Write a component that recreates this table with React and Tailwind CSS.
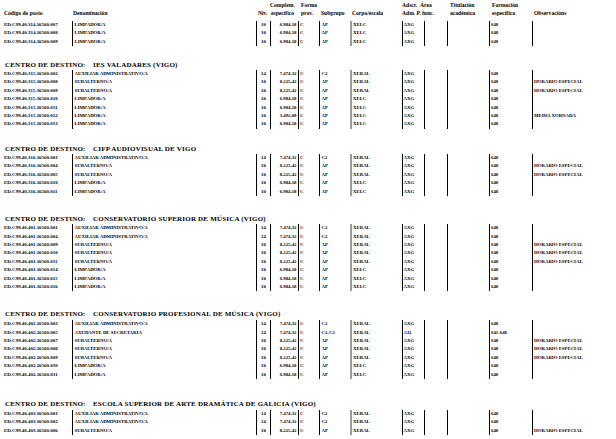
import React from "react";

const L = "LIMPADOR/A";
const S = "SUBALTERNO/A";
const AA = "AUXILIAR ADMINISTRATIVO/A";
const HE = "HORARIO ESPECIAL";

const r = (code, den, niv, comp, sub, corpo, ads = "AXG", form = "648", obs = "") => ({ code, den, niv, comp, sub, corpo, ads, form, obs });

const sections = [
  {
    title: null,
    mt: "mt-[3.8px]",
    rows: [
      r("ED.C99.40.314.16560.007", L, "10", "6.984,18", "AP", "XELC"),
      r("ED.C99.40.314.16560.008", L, "10", "6.984,18", "AP", "XELC"),
      r("ED.C99.40.314.16560.009", L, "10", "6.984,18", "AP", "XELC"),
    ],
  },
  {
    title: "IES VALADARES (VIGO)",
    mt: "mt-[14px]",
    rmt: "mt-0",
    rows: [
      r("ED.C99.40.315.16560.002", AA, "14", "7.474,32", "C2", "XERAL"),
      r("ED.C99.40.315.16560.008", S, "10", "8.225,42", "AP", "XERAL", "AXG", "648", HE),
      r("ED.C99.40.315.16560.009", S, "10", "8.225,42", "AP", "XERAL", "AXG", "648", HE),
      r("ED.C99.40.315.16560.010", L, "10", "6.984,18", "AP", "XELC"),
      r("ED.C99.40.315.16560.011", L, "10", "6.984,18", "AP", "XELC"),
      r("ED.C99.40.315.16560.012", L, "10", "3.492,09", "AP", "XELC", "AXG", "648", "MEDIA XORNADA"),
      r("ED.C99.40.315.16560.013", L, "10", "6.984,18", "AP", "XELC"),
    ],
  },
  {
    title: "CIFP AUDIOVISUAL DE VIGO",
    mt: "mt-[15.4px]",
    rmt: "mt-0",
    rows: [
      r("ED.C99.40.316.16560.001", AA, "14", "7.474,32", "C2", "XERAL"),
      r("ED.C99.40.316.16560.004", S, "10", "8.225,42", "AP", "XERAL", "AXG", "648", HE),
      r("ED.C99.40.316.16560.005", S, "10", "8.225,42", "AP", "XERAL", "AXG", "648", HE),
      r("ED.C99.40.316.16560.010", L, "10", "6.984,18", "AP", "XELC"),
      r("ED.C99.40.316.16560.011", L, "10", "6.984,18", "AP", "XELC"),
    ],
  },
  {
    title: "CONSERVATORIO SUPERIOR DE MÚSICA (VIGO)",
    mt: "mt-[18.2px]",
    rmt: "mt-0",
    rows: [
      r("ED.C99.40.401.16560.001", AA, "14", "7.474,32", "C2", "XERAL"),
      r("ED.C99.40.401.16560.004", AA, "14", "7.474,32", "C2", "XERAL"),
      r("ED.C99.40.401.16560.009", S, "10", "8.225,42", "AP", "XERAL", "AXG", "648", HE),
      r("ED.C99.40.401.16560.010", S, "10", "8.225,42", "AP", "XERAL", "AXG", "648", HE),
      r("ED.C99.40.401.16560.011", S, "10", "8.225,42", "AP", "XERAL", "AXG", "648", HE),
      r("ED.C99.40.401.16560.014", L, "10", "6.984,18", "AP", "XELC"),
      r("ED.C99.40.401.16560.015", L, "10", "6.984,18", "AP", "XELC"),
      r("ED.C99.40.401.16560.016", L, "10", "6.984,18", "AP", "XELC"),
    ],
  },
  {
    title: "CONSERVATORIO PROFESIONAL DE MÚSICA (VIGO)",
    mt: "mt-[17.5px]",
    rmt: "mt-[1.3px]",
    rows: [
      r("ED.C99.40.402.16560.003", AA, "14", "7.474,32", "C2", "XERAL"),
      r("ED.C99.40.402.16560.005", "AXUDANTE DE SECRETARÍA", "14", "7.474,32", "C1-C2", "XERAL", "A11", "641-648"),
      r("ED.C99.40.402.16560.007", S, "10", "8.225,42", "AP", "XERAL", "AXG", "648", HE),
      r("ED.C99.40.402.16560.008", S, "10", "8.225,42", "AP", "XERAL", "AXG", "648", HE),
      r("ED.C99.40.402.16560.009", S, "10", "8.225,42", "AP", "XERAL", "AXG", "648", HE),
      r("ED.C99.40.402.16560.030", L, "10", "6.984,18", "AP", "XELC"),
      r("ED.C99.40.402.16560.031", L, "10", "6.984,18", "AP", "XELC"),
    ],
  },
  {
    title: "ESCOLA SUPERIOR DE ARTE DRAMÁTICA DE GALICIA (VIGO)",
    mt: "mt-[20.4px]",
    rmt: "mt-[0.8px]",
    rows: [
      r("ED.C99.40.403.16560.001", AA, "14", "7.474,32", "C2", "XERAL"),
      r("ED.C99.40.403.16560.002", AA, "14", "7.474,32", "C2", "XERAL"),
      r("ED.C99.40.403.16560.006", S, "10", "8.225,42", "AP", "XERAL", "AXG", "648", HE),
    ],
  },
];

const grid =
  "grid grid-cols-[72px_184px_14px_27.5px_21.5px_31px_51.5px_22.5px_23px_42px_43px_1fr] h-[8.4px] leading-[8.4px] text-[4.8px] font-bold whitespace-nowrap";
const bl = "border-l border-black";

function Row({ d }) {
  return (
    <div className={grid}>
      <div className="pl-[4px] text-[4.95px]">{d.code}</div>
      <div className={`${bl} pl-[1.5px]`}>{d.den}</div>
      <div className={`${bl} text-center`}>{d.niv}</div>
      <div className={`${bl} text-right pr-[1px]`}>{d.comp}</div>
      <div className={`${bl} pl-[1.5px]`}>C</div>
      <div className={`${bl} pl-[1.5px]`}>{d.sub}</div>
      <div className="border-l-2 border-[#9a9a9a] pl-[1px]">{d.corpo}</div>
      <div className={`${bl} pl-[1px]`}>{d.ads}</div>
      <div className={bl}></div>
      <div className={bl}></div>
      <div className={`${bl} pl-[1px]`}>{d.form}</div>
      <div className="border-l-[1.5px] border-black pl-[1px]">{d.obs}</div>
    </div>
  );
}

function Header() {
  const c = "flex flex-col leading-[8px] h-[16px]";
  return (
    <div className="grid grid-cols-[73px_185px_12px_31px_20px_31px_50px_18px_30px_42px_42px_1fr] pt-[1px] text-[5.6px] font-bold whitespace-nowrap">
      <div className={`${c} justify-end pl-[4px]`}><span>Código do posto</span></div>
      <div className={`${c} justify-end`}><span>Denominación</span></div>
      <div className={`${c} justify-end`}><span>Niv.</span></div>
      <div className={c}><span>Complem.</span><span className="pl-[1px]">específico</span></div>
      <div className={c}><span>Forma</span><span>prov.</span></div>
      <div className={`${c} justify-end`}><span>Subgrupo</span></div>
      <div className={`${c} justify-end`}><span>Corpo/escala</span></div>
      <div className={c}><span>Adscr.</span><span>Adm. P.</span></div>
      <div className={c}><span>Área</span><span className="pl-[2px]">func.</span></div>
      <div className={c}><span>Titulación</span><span>académica</span></div>
      <div className={c}><span>Formación</span><span>específica</span></div>
      <div className={`${c} justify-end`}><span>Observacións</span></div>
    </div>
  );
}

export default function App() {
  return (
    <div className="w-[616px] h-[439px] overflow-hidden bg-white text-black font-['Liberation_Serif','Times_New_Roman',serif]">
      <Header />
      {sections.map((s, i) => (
        <div key={i}>
          {s.title ? (
            <div className={`${s.mt} h-[10px] leading-[10px] pl-[5px] text-[7px] font-bold tracking-[0.2px] whitespace-nowrap`}>
              <span className="inline-block w-[88px]">CENTRO DE DESTINO:</span>
              <span>{s.title}</span>
            </div>
          ) : null}
          <div className={s.title ? s.rmt : s.mt}>
            {s.rows.map((d, j) => (
              <Row key={j} d={d} />
            ))}
          </div>
        </div>
      ))}
    </div>
  );
}
